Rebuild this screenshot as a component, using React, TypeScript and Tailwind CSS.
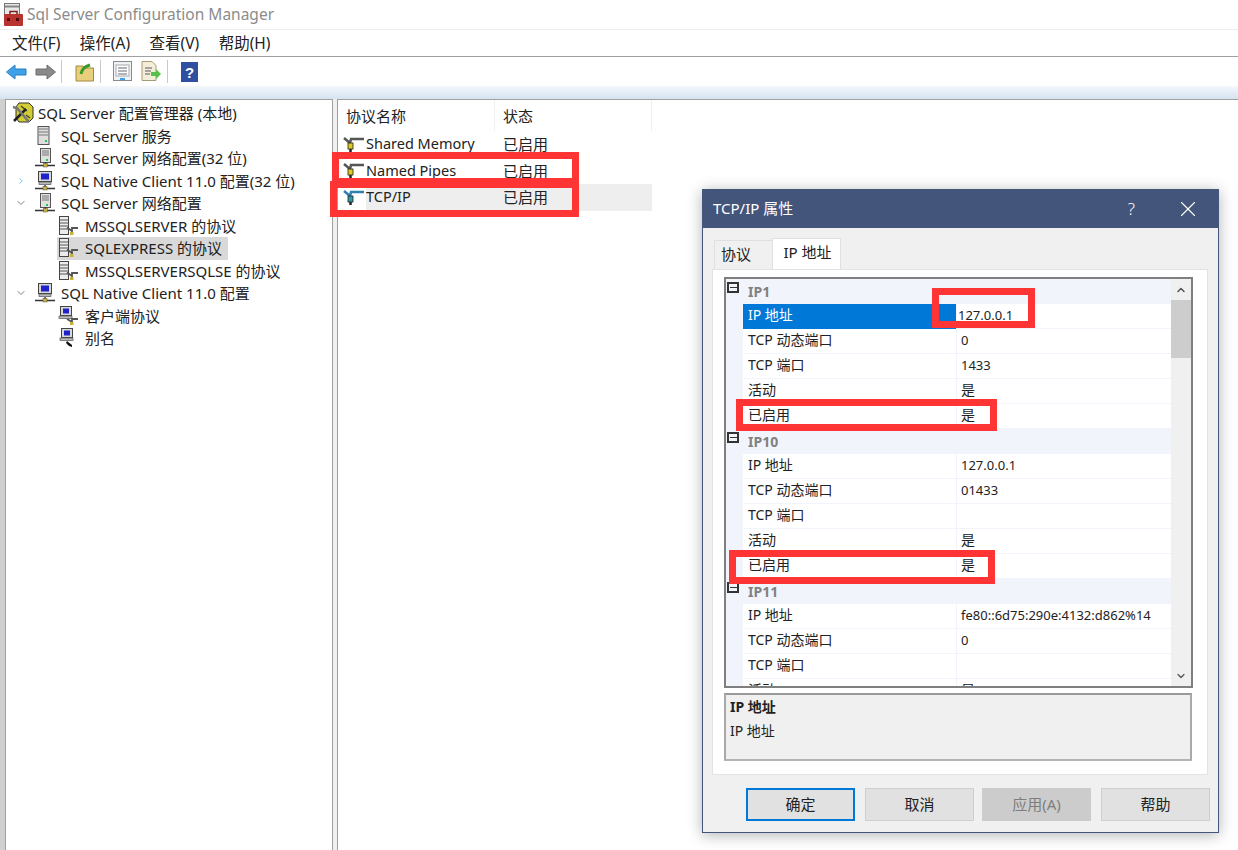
import { ChevronDown, ChevronRight, ChevronUp, X } from 'lucide-react';

const FONT = "font-['Noto_Sans','Noto_Sans_CJK_SC',sans-serif]";

// toolbar and tree pictures
const ServerTower = () => (
  <svg width="16" height="20" viewBox="0 0 16 20">
    <rect x="3" y="0.500" width="11" height="18" fill="#dedede" stroke="#555" />
    <path d="M4 3h9M4 6h9M4 9h9" stroke="#777" />
    <rect x="10" y="14" width="2" height="2" fill="#22c55e" />
  </svg>
);

const ServerNet = () => (
  <svg width="22" height="20" viewBox="0 0 22 20">
    <rect x="5.500" y="0.500" width="10" height="14" fill="#e0e0e0" stroke="#555" />
    <path d="M7 3h7M7 5h7M7 7h7" stroke="#777" />
    <rect x="11" y="11" width="2" height="2" fill="#22c55e" />
    <path d="M10.500 14v3M0 17.500h20" stroke="#333" strokeWidth="1.400" />
    <rect x="8.500" y="15.500" width="4" height="3.500" fill="#c9b23c" stroke="#555" strokeWidth="0.500" />
  </svg>
);

const MonitorNet = () => (
  <svg width="22" height="20" viewBox="0 0 22 20">
    <rect x="3.500" y="0.500" width="13" height="10" fill="#d8d8d8" stroke="#444" />
    <rect x="6" y="2.500" width="8" height="6" fill="#1e22c8" />
    <rect x="4" y="11" width="12" height="2.500" fill="#bbb" stroke="#555" strokeWidth="0.700" />
    <path d="M10 14v3M0 17.500h20" stroke="#333" strokeWidth="1.400" />
    <rect x="8" y="15.500" width="4" height="3.500" fill="#c9b23c" stroke="#555" strokeWidth="0.500" />
  </svg>
);

const ProtocolServer = () => (
  <svg width="22" height="20" viewBox="0 0 22 20">
    <rect x="1.500" y="0.500" width="9" height="18" fill="#ececec" stroke="#444" />
    <path d="M2 4h8M2 7h8M2 10h8M2 13h8" stroke="#555" />
    <path d="M9 11.500l5 3.500M20 12h-6v3M14 15v3" stroke="#555" strokeWidth="1.800" fill="none" />
    <rect x="12" y="16" width="3.500" height="3" fill="#c9b23c" />
  </svg>
);

const ClientProtocol = () => (
  <svg width="22" height="20" viewBox="0 0 22 20">
    <rect x="2.500" y="0.500" width="11" height="9" fill="#d8d8d8" stroke="#444" />
    <rect x="5" y="2.500" width="6" height="5" fill="#1e22c8" />
    <rect x="1" y="10" width="13" height="2.500" fill="#bbb" stroke="#555" strokeWidth="0.700" />
    <path d="M9 13l5 3M20 13h-6v3M14 16v2" stroke="#555" strokeWidth="1.800" fill="none" />
    <rect x="12" y="16" width="3.500" height="3" fill="#c9b23c" />
  </svg>
);

const AliasIcon = () => (
  <svg width="22" height="20" viewBox="0 0 22 20">
    <rect x="3.500" y="0.500" width="11" height="9" fill="#d8d8d8" stroke="#444" />
    <rect x="6" y="2.500" width="6" height="5" fill="#1e22c8" />
    <rect x="2" y="10" width="13" height="2.500" fill="#bbb" stroke="#555" strokeWidth="0.700" />
    <path d="M9 13l5 4v2l-3-1-3-3z" fill="#111" />
  </svg>
);

const Pipe = ({ tcp }: { tcp?: boolean }) => {
  const main = tcp ? '#2f7fb0' : '#555555';
  const plug = tcp ? '#2e9aa8' : '#dcc81e';
  return (
    <svg width="22" height="15" viewBox="0 0 22 15">
      <path d="M1 1l6 5M21 2H8L7 6" stroke={main} strokeWidth="2.500" fill="none" />
      <rect x="5" y="6" width="5" height="6" fill={plug} stroke="#222" strokeWidth="0.800" />
      <path d="M7.500 12v3" stroke="#222" strokeWidth="2.500" />
    </svg>
  );
};

const RootIcon = () => (
  <svg width="22" height="22" viewBox="0 0 22 22">
    <path d="M7 1h10l4 4v11l-4 4H7l-3-4V5z" fill="#d2cc35" stroke="#333" />
    <path d="M9 4l6 5M14 13l4 3" stroke="#444" strokeWidth="1.500" />
    <path d="M2 19L14 7" stroke="#222" strokeWidth="2.500" />
    <path d="M1 5l4 1 12 14" stroke="#777" strokeWidth="2.500" fill="none" />
  </svg>
);

const AppIcon = () => (
  <svg width="22" height="23" viewBox="0 0 22 23">
    <rect x="2.500" y="0.500" width="15" height="13" fill="#e8e8e8" stroke="#777" />
    <path d="M3 3.500h14" stroke="#888" strokeWidth="2" />
    <rect x="2" y="11" width="19" height="12" rx="1" fill="#b8332f" />
    <path d="M8 11V8.500h7V11" stroke="#7a1f1c" strokeWidth="1.500" fill="none" />
    <rect x="5" y="15" width="3" height="3" fill="#4a0d0b" />
    <rect x="14" y="15" width="3" height="3" fill="#4a0d0b" />
  </svg>
);

const Sep = () => <div className="mx-[5px] h-[23px] w-px bg-[#c8c8c8]" />;

const Toolbar = () => (
  <div className="flex h-[30px] items-center border-t border-[#a0a0a0] bg-white pl-[6px]">
    <svg width="21" height="16" viewBox="0 0 21 16">
      <path d="M0.500 8L9 1v4h11v6H9v4z" fill="#3ea2e8" stroke="#2b7fc0" />
    </svg>
    <svg width="21" height="16" viewBox="0 0 21 16" className="ml-2">
      <path d="M20.500 8L12 1v4H1v6h11v4z" fill="#8a8a8a" stroke="#6c6c6c" />
    </svg>
    <Sep />
    <svg width="20" height="21" viewBox="0 0 20 21" className="ml-[8px]">
      <path d="M1 5h7l2 2h8.500v13H1z" fill="#e9cf7c" stroke="#a08a3c" />
      <path d="M6 13c1-6 5-8 9-9" stroke="#3c9a2c" strokeWidth="3" fill="none" />
    </svg>
    <Sep />
    <svg width="20" height="21" viewBox="0 0 20 21" className="ml-[7px]">
      <rect x="0.500" y="0.500" width="18" height="19" fill="#eef1f5" stroke="#8a8a8a" />
      <rect x="3" y="4" width="13" height="11" fill="#fff" stroke="#aaa" />
      <path d="M5 7h9M5 10h9M5 13h9" stroke="#667" />
      <rect x="7" y="17" width="5" height="2" fill="#3ea2e8" />
    </svg>
    <svg width="21" height="21" viewBox="0 0 21 21" className="ml-[8px]">
      <path d="M1 .5h10l4 4v15H1z" fill="#f4eed8" stroke="#a89c76" />
      <path d="M4 7h7M4 10h6M4 13h5" stroke="#556" />
      <path d="M10 11h5V8l5 5-5 5v-3h-5z" fill="#56c04a" />
    </svg>
    <Sep />
    <svg width="17" height="20" viewBox="0 0 17 20" className="ml-[8px]">
      <rect x="0" y="0" width="17" height="20" fill="#2f4fa0" />
      <text x="8.500" y="15.500" textAnchor="middle" fontSize="15" fontWeight="700" fill="#fff" fontFamily="Liberation Sans">?</text>
    </svg>
  </div>
);

type TreeNode = { label: string; icon: React.ReactNode; indent: number; arrow?: 'open' | 'closed'; selected?: boolean };

const tree: TreeNode[] = [
  { label: 'SQL Server 服务', icon: <ServerTower />, indent: 1 },
  { label: 'SQL Server 网络配置(32 位)', icon: <ServerNet />, indent: 1 },
  { label: 'SQL Native Client 11.0 配置(32 位)', icon: <MonitorNet />, indent: 1, arrow: 'closed' },
  { label: 'SQL Server 网络配置', icon: <ServerNet />, indent: 1, arrow: 'open' },
  { label: 'MSSQLSERVER 的协议', icon: <ProtocolServer />, indent: 2 },
  { label: 'SQLEXPRESS 的协议', icon: <ProtocolServer />, indent: 2, selected: true },
  { label: 'MSSQLSERVERSQLSE 的协议', icon: <ProtocolServer />, indent: 2 },
  { label: 'SQL Native Client 11.0 配置', icon: <MonitorNet />, indent: 1, arrow: 'open' },
  { label: '客户端协议', icon: <ClientProtocol />, indent: 2 },
  { label: '别名', icon: <AliasIcon />, indent: 2 },
];

const TreeRow = ({ node }: { node: TreeNode }) => (
  <div className={`flex h-[22.5px] items-center ${node.indent === 2 ? 'pl-[52px]' : 'pl-[10px]'}`}>
    {node.indent === 1 && (
      <span className="flex w-[19px] justify-start">
        {node.arrow === 'closed' && <ChevronRight size={10} strokeWidth={2} className="text-[#4cc2f0]" />}
        {node.arrow === 'open' && <ChevronDown size={12} strokeWidth={1.500} className="-ml-[1px] text-[#555]" />}
      </span>
    )}
    <span className={`flex h-[22.5px] items-center ${node.selected ? '-ml-[1px] bg-[#d9d9d9] pr-[6px] pl-[1px]' : ''}`}>
      <span className={`flex justify-start ${node.indent === 2 ? 'w-[27px]' : 'w-[26px]'}`}>{node.icon}</span>
      <span className="whitespace-nowrap">{node.label}</span>
    </span>
  </div>
);

const TreePanel = () => (
  <div className="h-full w-[328px] border-t border-r border-l border-[#a0a0a0] bg-white pt-[2px] text-[15px]">
    <div className="flex h-[22.5px] items-center pl-[6px]">
      <span className="flex w-[26px]"><RootIcon /></span>
      <span className="whitespace-nowrap">SQL Server 配置管理器 (本地)</span>
    </div>
    {tree.map((n) => (
      <TreeRow key={n.label} node={n} />
    ))}
  </div>
);

const ListPanel = () => (
  <div className="h-full flex-1 border-t border-l border-[#a0a0a0] bg-white">
    <div className="flex h-[31px] w-[314px] items-center text-[15px]">
      <div className="flex h-full w-[157px] items-center border-r border-[#f0f0f0] pt-[1px] pl-[8px]">协议名称</div>
      <div className="flex h-full w-[157px] items-center border-r border-[#f0f0f0] pt-[1px] pl-[8px]">状态</div>
    </div>
    {[
      { name: 'Shared Memory' },
      { name: 'Named Pipes' },
      { name: 'TCP/IP', tcp: true },
    ].map((r) => (
      <div key={r.name} className={`flex h-[26.5px] w-[314px] items-center ${r.tcp ? 'bg-[#eeeeee]' : ''}`}>
        <span className={`flex h-full w-[28px] items-center pl-[5px] ${r.tcp ? 'bg-white' : ''}`}>
          <Pipe tcp={r.tcp} />
        </span>
        <span className="w-[129px] whitespace-nowrap">{r.name}</span>
        <span className="pl-[8px] text-[15px]">已启用</span>
      </div>
    ))}
  </div>
);

type Row = { k: string; v: string; selected?: boolean };
type Group = { title: string; rows: Row[] };

const groups: Group[] = [
  {
    title: 'IP1',
    rows: [
      { k: 'IP 地址', v: '127.0.0.1', selected: true },
      { k: 'TCP 动态端口', v: '0' },
      { k: 'TCP 端口', v: '1433' },
      { k: '活动', v: '是' },
      { k: '已启用', v: '是' },
    ],
  },
  {
    title: 'IP10',
    rows: [
      { k: 'IP 地址', v: '127.0.0.1' },
      { k: 'TCP 动态端口', v: '01433' },
      { k: 'TCP 端口', v: '' },
      { k: '活动', v: '是' },
      { k: '已启用', v: '是' },
    ],
  },
  {
    title: 'IP11',
    rows: [
      { k: 'IP 地址', v: 'fe80::6d75:290e:4132:d862%14' },
      { k: 'TCP 动态端口', v: '0' },
      { k: 'TCP 端口', v: '' },
      { k: '活动', v: '是' },
    ],
  },
];

const PropertyGrid = () => (
  <div className="flex h-[411px] w-[469px] border-2 border-[#7f7f7f] bg-white text-[14px]">
    <div className="h-full w-[445px] overflow-hidden">
      {groups.map((g) => (
        <div key={g.title}>
          <div className="relative flex h-[25px] items-center bg-[#f1f5fb] pl-[22px] font-bold text-[#808080]">
            <span className="absolute top-[3px] left-[1px] flex h-[11px] w-[12px] items-center justify-center border-2 border-[#333] bg-[#f1f5fb]">
              <span className="h-[1.500px] w-[7px] bg-[#333]" />
            </span>
            {g.title}
          </div>
          {g.rows.map((r) => (
            <div key={r.k} className="flex h-[25px] bg-[#f1f5fb] pl-[17px]">
              <div className={`flex w-[213px] items-center border-b pb-[3px] pl-[5px] ${r.selected ? 'border-[#0078d7] bg-[#0078d7] text-white' : 'border-[#f1f5fb] bg-white'}`}>
                {r.k}
              </div>
              <div className={`flex flex-1 items-center border-b border-l border-[#f1f5fb] bg-white whitespace-nowrap ${r.selected ? 'pl-[1px]' : 'pl-[4px]'} ${r.v === '是' ? 'pb-[3px] text-[14px]' : 'text-[13px]'}`}>
                {r.v}
              </div>
            </div>
          ))}
        </div>
      ))}
    </div>
    <div className="flex w-[20px] flex-col bg-[#f0f0f0]">
      <div className="flex h-[21px] items-center justify-center">
        <ChevronUp size={12} strokeWidth={3} className="text-[#555]" />
      </div>
      <div className="h-[58px] bg-[#cdcdcd]" />
      <div className="flex-1" />
      <div className="flex h-[21px] items-center justify-center">
        <ChevronDown size={12} strokeWidth={2.500} className="text-[#555]" />
      </div>
    </div>
  </div>
);

const Btn = ({ label, cls }: { label: string; cls: string }) => (
  <div className={`flex h-[33px] w-[109px] items-center justify-center border text-[15px] ${cls}`}>{label}</div>
);

const Redbox = ({ cls }: { cls: string }) => (
  <div className={`pointer-events-none absolute border-[7px] border-[#ff3535] ${cls}`} />
);

const Dialog = () => (
  <div className="absolute top-[189px] left-[702px] flex h-[644px] w-[517px] flex-col border border-[#44557b] bg-[#f0f0f0] text-[15px] shadow-[0_2px_14px_rgba(0,0,0,0.3)]">
    <div className="flex h-[38px] shrink-0 items-center bg-[#44557b] pl-[10px] text-white">
      <span className="flex-1 pb-[2px]">TCP/IP 属性</span>
      <span className="mr-[40px] text-[17px] font-light">?</span>
      <X size={26} strokeWidth={1} className="mr-[17px]" />
    </div>
    <div className="flex h-[41px] items-end pl-[11px]">
      <div className="flex h-[29px] w-[58px] items-center border-t border-l border-[#e0e0e0] pb-[2px] pl-[6px]">协议</div>
      <div className="flex h-[31px] w-[69px] items-start justify-center border-x border-t border-[#e0e0e0] bg-white pt-[2px] pl-[2px]">IP 地址</div>
    </div>
    <div className="mx-[9px] h-[506px] w-[496px] border border-[#e3e3e3] bg-white px-[11px] pt-[7px]">
      <PropertyGrid />
      <div className="mt-[5px] h-[68px] w-[468px] border-2 border-[#a9a9a9] border-t-[#999] border-b-[#b4b4b4] bg-[#f0f0f0] px-[4px] pt-[1px] text-[14px]">
        <div className="font-bold">IP 地址</div>
        <div className="mt-[3px]">IP 地址</div>
      </div>
    </div>
    <div className="flex items-start pt-[13px] pl-[43px]">
      <Btn label="确定" cls="border-[#0078d7] border-2 bg-[#e1e1e1]" />
      <div className="w-[10px]" />
      <Btn label="取消" cls="border-[#cfcfcf] bg-[#e1e1e1]" />
      <div className="w-[8px]" />
      <Btn label="应用(A)" cls="border-[#cccccc] bg-[#cccccc] text-[#7e7e7e]" />
      <div className="w-[10px]" />
      <Btn label="帮助" cls="border-[#cfcfcf] bg-[#e1e1e1]" />
    </div>
  </div>
);

export default function App() {
  return (
    <div className={`relative flex h-[850px] w-[1238px] flex-col overflow-hidden bg-white text-[14.5px] text-[#222] ${FONT}`}>
      <div className="flex h-[29px] items-center pl-[2px] text-[15.5px] text-[#8c8c8c]">
        <AppIcon />
        <span className="ml-[3px]">Sql Server Configuration Manager</span>
      </div>
      <div className="flex h-[27px] items-center gap-[19.5px] border-t border-[#eeeeee] pt-[1px] pl-[12px] text-[15.5px]">
        <span>文件(F)</span>
        <span>操作(A)</span>
        <span>查看(V)</span>
        <span>帮助(H)</span>
      </div>
      <Toolbar />
      <div className="h-[13px] bg-linear-to-b from-[#f4f7fb] to-[#d5e3f1]" />
      <div className="flex min-h-0 flex-1 bg-[#d0d0d0] pl-[5px]">
        <TreePanel />
        <div className="w-[4px] bg-[#f0f0f0]" />
        <ListPanel />
      </div>

      <Redbox cls="top-[152px] left-[332px] h-[33px] w-[247px]" />
      <Redbox cls="top-[181px] left-[330px] h-[36px] w-[249px]" />

      <Dialog />

      <Redbox cls="top-[288px] left-[932px] h-[40px] w-[103px]" />
      <Redbox cls="top-[399px] left-[736px] h-[32px] w-[261px]" />
      <Redbox cls="top-[550px] left-[729px] h-[34px] w-[266px]" />
    </div>
  );
}
